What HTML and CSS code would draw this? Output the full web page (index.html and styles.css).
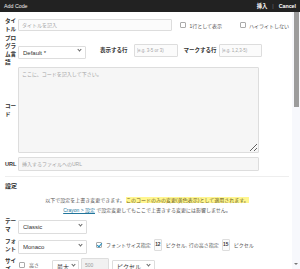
FILE: index.html
```html
<!DOCTYPE html>
<html lang="ja">
<head>
    <meta charset="UTF-8">
    <meta name="viewport" content="width=device-width, initial-scale=1.0">
    <title>Add Code</title>
    <link rel="stylesheet" href="styles.css">
</head>
<body>

    <div class="dialog">
        <div class="titlebar">
            <span class="dialog-title">Add Code</span>
            <div class="actions">
                <a href="#" class="action">挿入</a>
                <span class="sep">|</span>
                <a href="#" class="action">Cancel</a>
            </div>
        </div>

        <div class="main">
            <div class="content">
                <!-- タイトル -->
                <div class="row">
                    <label class="label">タイトル</label>
                    <input class="field title-field" type="text" placeholder="タイトルを記入">
                    <label class="check first-check"><input type="checkbox">1行として表示</label>
                    <label class="check second-check"><input type="checkbox">ハイライトしない</label>
                </div>

                <!-- 言語と行 -->
                <div class="row row-lang">
                    <label class="label">プログラム言語</label>
                    <div class="select-wrap lang-select">
                        <select class="select"><option>Default *</option></select>
                    </div>
                    <span class="inline-label show-lines">表示する行</span>
                    <input class="field lines-field" type="text" placeholder="(e.g. 3-5 or 3)">
                    <span class="inline-label mark-lines">マークする行</span>
                    <input class="field mark-field" type="text" placeholder="(e.g. 1,2,3-5)">
                </div>

                <!-- コード -->
                <div class="row row-code">
                    <label class="label">コード</label>
                    <textarea class="code-area" placeholder="ここに、コードを記入して下さい。"></textarea>
                </div>

                <!-- URL -->
                <div class="row row-url">
                    <label class="label">URL</label>
                    <input class="field url-field" type="text" placeholder="挿入するファイルへのURL">
                </div>

                <hr class="divider">

                <h2 class="section-title">設定</h2>
                <p class="note">
                    以下で設定を上書き変更できます。 <span class="changed">このコードのみの変更(黄色表示)として適用されます。</span><br>
                    <a href="#" class="note-link">Crayon &gt; 設定</a> で設定変更してもここで上書きする変更には影響しません。
                </p>

                <div class="row row-setting">
                    <label class="label">テーマ</label>
                    <div class="select-wrap setting-select">
                        <select class="select"><option>Classic</option></select>
                    </div>
                </div>

                <div class="row row-setting">
                    <label class="label">フォント</label>
                    <div class="select-wrap setting-select">
                        <select class="select"><option>Monaco</option></select>
                    </div>
                    <label class="check font-check"><input type="checkbox" checked>フォントサイズ指定</label>
                    <input class="num-field" type="text" value="12">
                    <span class="small-text">ピクセル, 行の高さ指定</span>
                    <input class="num-field" type="text" value="15">
                    <span class="small-text">ピクセル</span>
                </div>

                <div class="row row-setting">
                    <label class="label">サイズ</label>
                    <label class="check size-check"><input type="checkbox">高さ</label>
                    <div class="select-wrap max-select">
                        <select class="select"><option>最大</option></select>
                    </div>
                    <input class="field size-field" type="text" value="500">
                    <div class="select-wrap unit-select">
                        <select class="select"><option>ピクセル</option></select>
                    </div>
                </div>
            </div>

            <!-- スクロールバー -->
            <div class="scrollbar">
                <div class="thumb"></div>
                <div class="arrow-down"></div>
            </div>
        </div>
    </div>

</body>
</html>
```

FILE: styles.css
```css
* {
    box-sizing: border-box;
}

body {
    margin: 0;
    font-family: "Liberation Sans", "Noto Sans CJK JP", sans-serif;
    color: #444;
    background: #fff;
}

.dialog {
    width: 300px;
    height: 269px;
    display: flex;
    flex-direction: column;
}

/* タイトルバー */
.titlebar {
    flex: none;
    height: 12px;
    padding: 0 4px;
    display: flex;
    align-items: center;
    justify-content: space-between;
    background: #222;
    color: #eee;
    font-size: 5.3px;
}

.actions {
    display: flex;
    align-items: center;
    gap: 5px;
}

.action {
    color: #fff;
    font-weight: bold;
    text-decoration: none;
}

.sep {
    color: #777;
}

.main {
    flex: 1;
    display: flex;
    min-height: 0;
}

.content {
    flex: 1;
    overflow: hidden;
    padding: 5px 3px 0 5px;
}

/* スクロールバー */
.scrollbar {
    flex: none;
    width: 8px;
    display: flex;
    flex-direction: column;
    justify-content: space-between;
    background: #f7f8fc;
}

.thumb {
    width: 5px;
    height: 95px;
    margin-left: 2px;
    background: #9c9c9c;
}

.arrow-down {
    width: 0;
    height: 0;
    margin: 0 0 4px 2px;
    border-left: 2px solid transparent;
    border-right: 2px solid transparent;
    border-top: 2px solid #777;
}

.row {
    display: flex;
    align-items: center;
    margin-bottom: 1px;
}

.label {
    flex: none;
    width: 12px;
    margin-right: 1px;
    font-size: 5.6px;
    line-height: 8px;
    font-weight: bold;
    color: #333;
}

.field {
    height: 12px;
    padding: 0 3px;
    border: 1px solid #ddd;
    border-radius: 1px;
    background: #fbfbfb;
    font-family: inherit;
    font-size: 5px;
    color: #333;
    outline: none;
}

.field::placeholder,
.code-area::placeholder {
    color: #a5a5a5;
}

.title-field {
    width: 156px;
}

.check {
    display: flex;
    align-items: center;
    font-size: 5px;
    color: #555;
    white-space: nowrap;
}

.check input {
    appearance: none;
    width: 6px;
    height: 6px;
    margin: 0 3px 0 0;
    border: 1px solid #aaa;
    border-radius: 1px;
    background: #fff;
    position: relative;
}

.check input:checked::before {
    content: "";
    position: absolute;
    left: 1px;
    top: -1px;
    width: 2px;
    height: 4px;
    border-right: 1px solid #1e8cbe;
    border-bottom: 1px solid #1e8cbe;
    transform: rotate(40deg);
}

.first-check {
    margin-left: 8px;
}

.second-check {
    margin-left: 18px;
}

/* セレクト */
.select-wrap {
    position: relative;
    flex: none;
}

.select-wrap::after {
    content: "";
    position: absolute;
    right: 5px;
    top: 50%;
    width: 2px;
    height: 2px;
    margin-top: -2px;
    border-right: 1px solid #666;
    border-bottom: 1px solid #666;
    transform: rotate(45deg);
    pointer-events: none;
}

.select {
    appearance: none;
    width: 100%;
    height: 13px;
    padding: 0 8px 0 4px;
    border: 1px solid #ddd;
    border-radius: 1px;
    background: #fff;
    font-family: inherit;
    font-size: 6px;
    color: #333;
    outline: none;
}

.row-lang {
    margin-top: 1px;
}

.lang-select {
    width: 68px;
}

.inline-label {
    font-size: 5.5px;
    font-weight: bold;
    color: #333;
    white-space: nowrap;
}

.show-lines {
    margin: 0 6px 0 14px;
}

.mark-lines {
    margin: 0 2px 0 6px;
}

.lines-field,
.mark-field {
    width: 44px;
    height: 13px;
    font-size: 4.5px;
    padding: 0 2px;
}

.mark-field {
    width: 43px;
}

/* コード */
.row-code {
    margin-top: 1px;
}

.code-area {
    width: 241px;
    height: 86px;
    padding: 2px 3px;
    border: 1px solid #ddd;
    border-radius: 1px;
    background: #f6f6f6;
    font-family: inherit;
    font-size: 5px;
    color: #333;
    outline: none;
}

.row-url {
    margin-top: 4px;
}

.url-field {
    width: 241px;
    height: 14px;
    background: #f6f6f6;
}

.divider {
    height: 0;
    margin: 5px 0 0;
    border: none;
    border-top: 1.5px solid #eee;
}

.section-title {
    margin: 5px 0 0;
    font-size: 6px;
    line-height: 8px;
    color: #333;
}

.note {
    margin: 5px 0 0;
    text-align: center;
    font-size: 5px;
    line-height: 10px;
    color: #555;
}

.changed {
    background: #fff68f;
    color: #6a5d1e;
}

.note-link {
    color: #21759b;
}

/* 設定の行 */
.row-setting {
    min-height: 16px;
}

.setting-select {
    width: 69px;
}

.setting-select .select,
.max-select .select,
.unit-select .select {
    height: 14px;
}

.font-check {
    margin-left: 9px;
}

.font-check input {
    margin-right: 4px;
}

.num-field {
    width: 8px;
    height: 12px;
    margin: 0 4px 0 3px;
    padding: 0;
    border: 1px solid #ddd;
    border-radius: 1px;
    background: #fbfbfb;
    font-family: inherit;
    font-size: 4.8px;
    font-weight: bold;
    text-align: center;
    color: #333;
}

.small-text {
    font-size: 5px;
    color: #555;
    white-space: nowrap;
}

.size-check {
    margin-left: 1px;
}

.size-check input {
    margin-right: 4px;
}

.max-select {
    width: 27px;
    margin-left: 13px;
}

.max-select::after {
    right: 4px;
}

.size-field {
    width: 28px;
    height: 14px;
    margin: 0 3px 0 2px;
    background: #f1f1f1;
    color: #999;
}

.unit-select {
    width: 43px;
}
```
